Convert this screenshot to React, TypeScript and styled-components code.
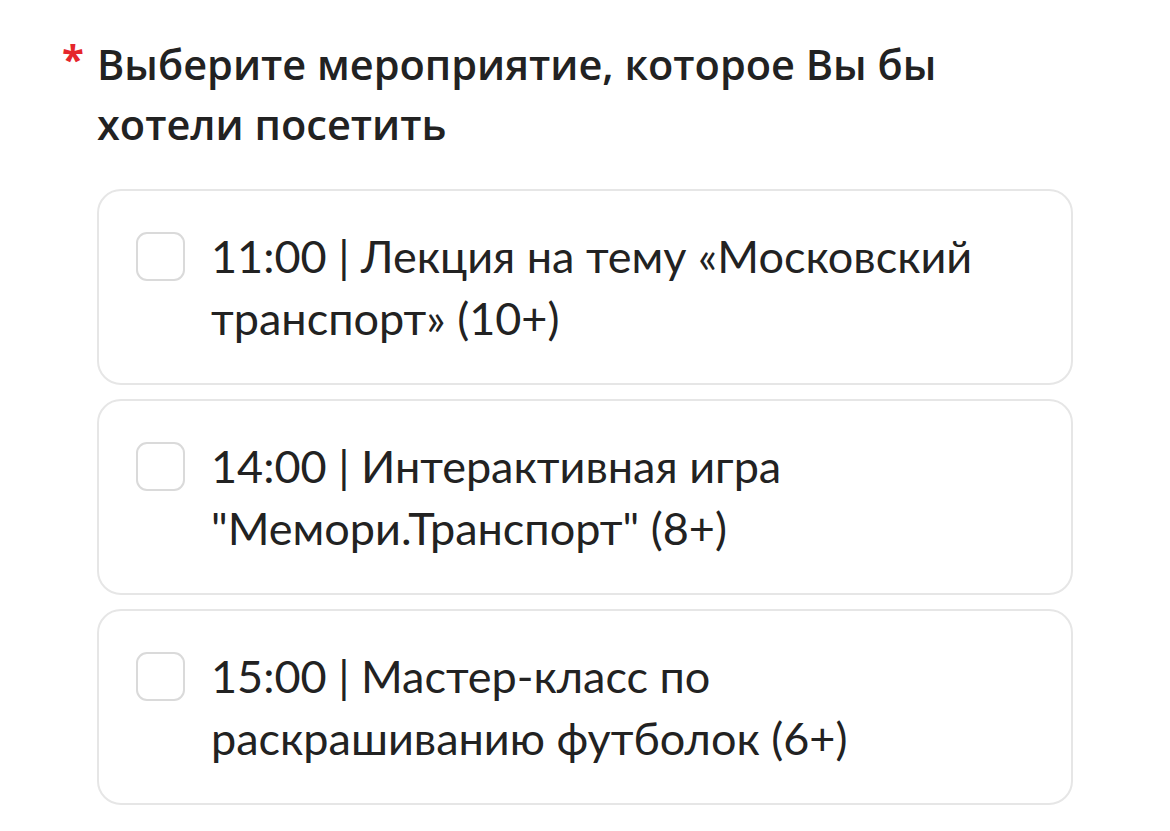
import React from "react";
import styled, { createGlobalStyle } from "styled-components";

const Global = createGlobalStyle`
  html, body { margin: 0; padding: 0; background: #ffffff; }
  body { font-family: "Lato", "Open Sans", "Liberation Sans", sans-serif; color: #222222; }
`;

const Page = styled.div`
  padding: 34px 0 0 62px;
  width: 1011px;
`;

const TitleRow = styled.div`
  display: flex;
  align-items: flex-start;
`;

const Asterisk = styled.span`
  width: 35px;
  flex: none;
  color: #e5262b;
  font-family: "Open Sans", sans-serif;
  font-size: 40px;
  font-weight: 700;
  line-height: 50px;
`;

const Title = styled.h1`
  margin: 0;
  font-family: "Open Sans", "Noto Sans", sans-serif;
  font-size: 41.5px;
  font-weight: 600;
  line-height: 60px;
  color: #222222;
`;

const List = styled.div`
  margin: 35px 0 0 35px;
  display: flex;
  flex-direction: column;
  gap: 14px;
`;

const Card = styled.label`
  display: flex;
  align-items: flex-start;
  gap: 26px;
  box-sizing: border-box;
  min-height: 196px;
  padding: 34px 37px;
  border: 2px solid #e6e6e6;
  border-radius: 24px;
  cursor: pointer;
`;

const Box = styled.span`
  flex: none;
  box-sizing: border-box;
  width: 49px;
  height: 49px;
  margin-top: 7px;
  border: 2px solid #dadada;
  border-radius: 11px;
  background: #fff;
`;

const Text = styled.span`
  font-size: 45px;
  line-height: 62px;
  color: #222222;
`;

const items = [
  ["11:00 | Лекция на тему «Московский", "транспорт» (10+)"],
  ["14:00 | Интерактивная игра", "\"Мемори.Транспорт\" (8+)"],
  ["15:00 | Мастер-класс по", "раскрашиванию футболок (6+)"],
];

export default function App() {
  return (
    <>
      <Global />
      <Page>
        <TitleRow>
          <Asterisk>*</Asterisk>
          <Title>
            Выберите мероприятие, которое Вы бы
            <br />
            хотели посетить
          </Title>
        </TitleRow>
        <List>
          {items.map((lines, i) => (
            <Card key={i}>
              <Box />
              <Text>
                {lines[0]}
                <br />
                {lines[1]}
              </Text>
            </Card>
          ))}
        </List>
      </Page>
    </>
  );
}
